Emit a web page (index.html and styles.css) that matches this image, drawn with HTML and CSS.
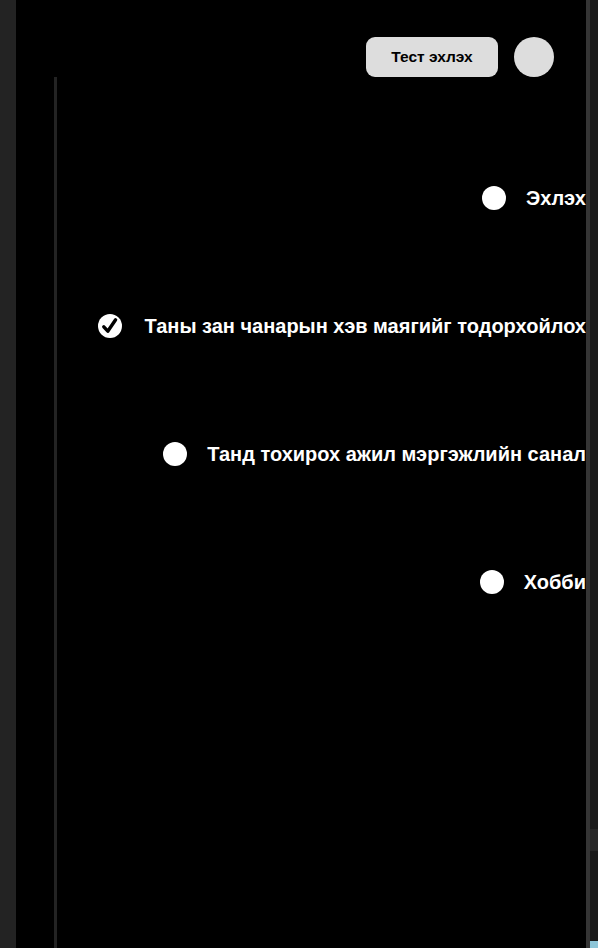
FILE: index.html
```html
<!DOCTYPE html>
<html lang="mn">
<head>
<meta charset="utf-8">
<title>Timeline</title>
<link rel="stylesheet" href="styles.css">
</head>
<body>
<div class="gutter"></div>
<main class="main">
  <header class="topbar">
    <button class="start-btn">Тест эхлэх</button>
    <div class="avatar"></div>
  </header>
  <section class="timeline">
    <div class="step">
      <span class="dot"></span>
      <span class="label">Эхлэх</span>
    </div>
    <div class="step">
      <svg class="check" viewBox="0 0 24 24" width="24" height="24">
        <circle cx="12" cy="12" r="12" fill="#fff"/>
        <path d="M5.8 12.8 L9.8 17.2 L17.6 5.8" fill="none" stroke="#000" stroke-width="3.4" stroke-linecap="round" stroke-linejoin="round"/>
      </svg>
      <span class="label">Таны зан чанарын хэв маягийг тодорхойлох</span>
    </div>
    <div class="step">
      <span class="dot"></span>
      <span class="label">Танд тохирох ажил мэргэжлийн санал</span>
    </div>
    <div class="step">
      <span class="dot"></span>
      <span class="label">Хобби</span>
    </div>
  </section>
</main>
<div class="divider"></div>
<div class="scrollbar">
  <div class="scroll-track"></div>
  <div class="scroll-thumb"></div>
  <div class="scroll-rest"></div>
  <div class="scroll-corner"></div>
</div>
</body>
</html>
```
FILE: styles.css
```css
html, body {
  margin: 0;
  padding: 0;
  height: 100%;
}
body {
  display: flex;
  background: #000;
  font-family: "Liberation Sans", Arial, sans-serif;
  overflow: hidden;
}
.gutter {
  width: 16px;
  flex: none;
  background: #232323;
}
.main {
  flex: 1;
  min-width: 0;
  background: #000;
  display: flex;
  flex-direction: column;
  overflow: hidden;
}
.topbar {
  display: flex;
  justify-content: flex-end;
  align-items: center;
  gap: 16px;
  padding: 37px 32px 0 0;
  height: 40px;
}
.start-btn {
  width: 132px;
  height: 40px;
  border: none;
  border-radius: 9px;
  background: #dddddd;
  color: #000;
  font-family: "Liberation Sans", Arial, sans-serif;
  font-weight: bold;
  font-size: 15.5px;
  padding: 0;
}
.avatar {
  width: 40px;
  height: 40px;
  border-radius: 50%;
  background: #dddddd;
}
.timeline {
  flex: 1;
  margin-left: 38px;
  border-left: 3px solid #232323;
  padding-top: 109px;
  display: flex;
  flex-direction: column;
  gap: 104px;
}
.step {
  display: flex;
  justify-content: flex-end;
  align-items: center;
  gap: 20px;
  height: 24px;
  white-space: nowrap;
}
.dot {
  width: 24px;
  height: 24px;
  border-radius: 50%;
  background: #fff;
  flex: none;
}
.check {
  flex: none;
  display: block;
  margin-right: 2px;
}
.label {
  color: #fff;
  font-weight: bold;
  font-size: 20px;
}
.divider {
  width: 4px;
  flex: none;
  background: #353535;
}
.scrollbar {
  width: 8px;
  flex: none;
  display: flex;
  flex-direction: column;
  background: #1a1a1a;
}
.scroll-track {
  height: 829px;
  background: #1b1b1b;
}
.scroll-thumb {
  height: 22px;
  background: #272727;
}
.scroll-rest {
  flex: 1;
  background: #1a1a1a;
}
.scroll-corner {
  height: 7px;
  background: #8ec6d8;
}
```
